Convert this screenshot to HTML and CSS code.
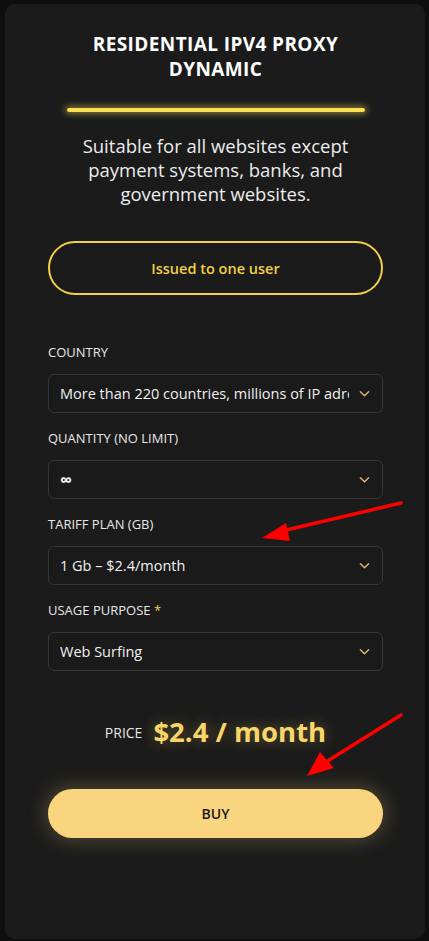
FILE: index.html
```html
<!DOCTYPE html>
<html lang="en">
<head>
<meta charset="utf-8">
<title>Residential IPv4 Proxy Dynamic</title>
<link rel="stylesheet" href="styles.css">
</head>
<body>
<div class="card">
  <h1 class="title">RESIDENTIAL IPV4 PROXY<br>DYNAMIC</h1>
  <div class="glow-bar"></div>
  <p class="desc">Suitable for all websites except payment systems, banks, and government websites.</p>
  <div class="pill">Issued to one user</div>

  <div class="fields">
    <div class="field">
      <div class="label">COUNTRY</div>
      <div class="select"><span class="value">More than 220 countries, millions of IP adresses</span><svg class="chev" viewBox="0 0 12 8"><path d="M1.5 1.5 L6 6 L10.5 1.5"/></svg></div>
    </div>
    <div class="field">
      <div class="label">QUANTITY (NO LIMIT)</div>
      <div class="select"><span class="value infinity">∞</span><svg class="chev" viewBox="0 0 12 8"><path d="M1.5 1.5 L6 6 L10.5 1.5"/></svg></div>
    </div>
    <div class="field">
      <div class="label">TARIFF PLAN (GB)</div>
      <div class="select"><span class="value">1 Gb – $2.4/month</span><svg class="chev" viewBox="0 0 12 8"><path d="M1.5 1.5 L6 6 L10.5 1.5"/></svg></div>
    </div>
    <div class="field">
      <div class="label">USAGE PURPOSE <span class="req">*</span></div>
      <div class="select"><span class="value">Web Surfing</span><svg class="chev" viewBox="0 0 12 8"><path d="M1.5 1.5 L6 6 L10.5 1.5"/></svg></div>
    </div>
  </div>

  <div class="price-row">
    <span class="price-label">PRICE</span>
    <span class="price">$2.4 / month</span>
  </div>
  <button class="buy">BUY</button>
</div>

<svg class="arrows" width="429" height="941" viewBox="0 0 429 941">
  <line x1="401" y1="503" x2="282" y2="531" stroke="#f00" stroke-width="3.5" stroke-linecap="round"/>
  <polygon points="262,538 286,523 290,541" fill="#f00"/>
  <line x1="401" y1="715" x2="326" y2="762" stroke="#f00" stroke-width="3.5" stroke-linecap="round"/>
  <polygon points="307,776 320,752 334,768" fill="#f00"/>
</svg>
</body>
</html>
```
FILE: styles.css
```css
html, body {
  margin: 0;
  padding: 0;
}
body {
  background: #0e0e0e;
  width: 429px;
  height: 941px;
  position: relative;
  overflow: hidden;
  font-family: "Open Sans", Lato, sans-serif;
  padding: 4px 4px 2px 5px;
  box-sizing: border-box;
}
.card {
  background: #1b1b1b;
  border-radius: 10px;
  height: 935px;
  box-sizing: border-box;
  padding: 28px 42px 0 43px;
  display: flex;
  flex-direction: column;
  color: #fff;
}
.title {
  margin: 0;
  text-align: center;
  font-size: 19px;
  line-height: 25px;
  font-weight: 700;
  letter-spacing: 0.4px;
  color: #fff;
}
.glow-bar {
  margin: 26px auto 0;
  width: 298px;
  height: 4px;
  border-radius: 2px;
  background: #f9dd52;
  box-shadow: 0 0 6px 2px rgba(249, 221, 82, 0.45);
}
.desc {
  margin: 22px 0 0;
  text-align: center;
  font-size: 18.5px;
  line-height: 24px;
  color: #ececec;
  padding: 0 12px;
}
.pill {
  margin-top: 35px;
  height: 54px;
  box-sizing: border-box;
  border: 2px solid #f2cf48;
  border-radius: 27px;
  display: flex;
  align-items: center;
  justify-content: center;
  color: #f2cf48;
  font-size: 14.5px;
  font-weight: 600;
}
.fields {
  margin-top: 49px;
  display: flex;
  flex-direction: column;
  gap: 17px;
}
.field {
  display: flex;
  flex-direction: column;
}
.label {
  font-size: 13px;
  line-height: 16px;
  color: #e8e8e8;
}
.req {
  color: #f2cf48;
}
.select {
  margin-top: 14px;
  height: 39px;
  box-sizing: border-box;
  border: 1px solid #363636;
  border-radius: 6px;
  background: #1a1a1a;
  display: flex;
  align-items: center;
  padding: 0 12px 0 11px;
  gap: 10px;
}
.value {
  flex: 1;
  min-width: 0;
  white-space: nowrap;
  overflow: hidden;
  font-size: 14.5px;
  color: #f0f0f0;
}
.infinity {
  overflow: visible;
  font-size: 17px;
  font-weight: 700;
}
.chev {
  width: 11px;
  height: 8px;
  flex: none;
  fill: none;
  stroke: #dcb46a;
  stroke-width: 1.6;
  stroke-linecap: round;
  stroke-linejoin: round;
}
.price-row {
  margin-top: 42px;
  height: 36px;
  display: flex;
  align-items: center;
  justify-content: center;
  gap: 11px;
}
.price-label {
  font-size: 14px;
  color: #e6e6e6;
  margin-top: 2px;
}
.price {
  font-size: 27.5px;
  font-weight: 700;
  color: #f9d66a;
  text-shadow: 0 0 14px rgba(249, 214, 106, 0.35);
}
.buy {
  margin-top: 40px;
  height: 49px;
  border: none;
  border-radius: 25px;
  background: #f9d57f;
  color: #1a1a1a;
  font-family: inherit;
  font-size: 14px;
  font-weight: 600;
  box-shadow: 0 0 18px 4px rgba(249, 213, 127, 0.22);
  cursor: pointer;
}
.arrows {
  position: absolute;
  top: 0;
  left: 0;
  pointer-events: none;
}
```
